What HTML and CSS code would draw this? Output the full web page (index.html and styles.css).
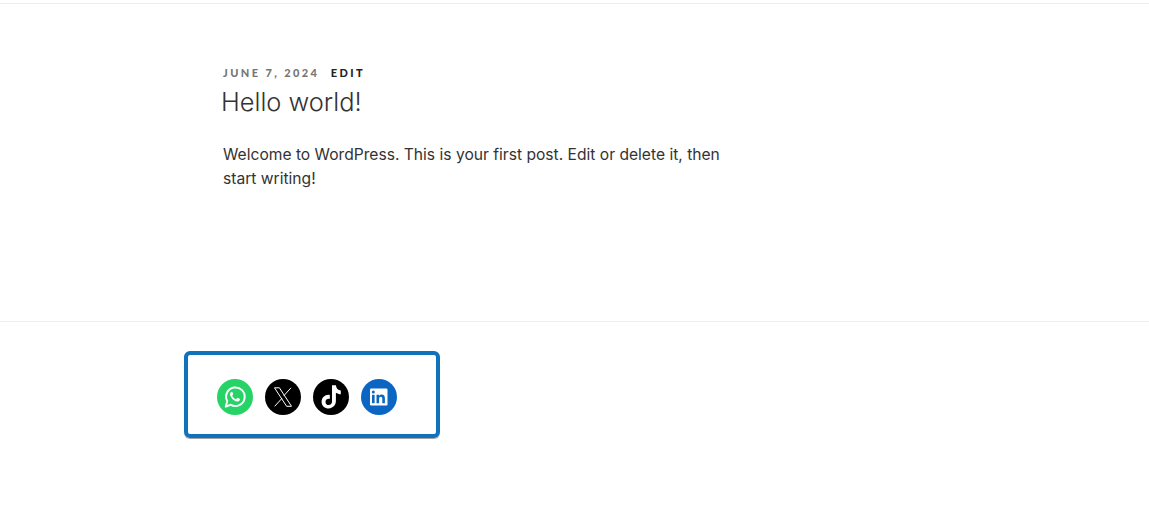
FILE: index.html
```html
<!DOCTYPE html>
<html lang="en">
<head>
<meta charset="utf-8">
<title>Hello world!</title>
<link rel="stylesheet" href="styles.css">
</head>
<body>
<header class="top-rule"></header>
<main class="content">
  <article class="post">
    <div class="meta"><span class="date">JUNE 7, 2024</span><a class="edit" href="#">EDIT</a></div>
    <h1 class="title">Hello world!</h1>
    <p class="text">Welcome to WordPress. This is your first post. Edit or delete it, then start writing!</p>
  </article>
</main>
<footer class="footer">
  <div class="social-box">
    <a class="icon whatsapp" href="#" aria-label="WhatsApp">
      <svg viewBox="0 0 36 36" width="36" height="36"><path class="wa-ring" d="M8.800 27.600l1.500-5.300a9.300 9.300 0 1 1 3.500 3.500z"/><path class="wa-phone" d="M14.900 12.700c-.4 0-.8.2-1.100.6-.5.6-.9 1.400-.8 2.300.1 1.200.8 2.500 2 3.800 1.500 1.700 3.200 2.800 5 3.100 1 .2 2-.2 2.600-1 .3-.4.4-.9.3-1.400-.8-.6-1.600-1.100-2.500-1.400-.4.3-.7.8-1 1.200-.2.2-.5.2-.8.1-1.400-.6-2.600-1.700-3.300-3-.1-.2-.1-.4.1-.6.3-.3.6-.7.8-1.100-.2-.9-.6-1.800-1-2.500z"/></svg>
    </a>
    <a class="icon x" href="#" aria-label="X">
      <svg viewBox="0 0 36 36" width="36" height="36"><path class="x-outline" d="M9.500 8.800h4.900l12.100 18.500h-4.900z"/><path class="x-stroke" d="M26 8.800l-7.300 8.100M17 19.300l-7.300 8"/></svg>
    </a>
    <a class="icon tiktok" href="#" aria-label="TikTok">
      <svg viewBox="0 0 36 36" width="36" height="36"><path class="tt" d="M19 6.200h3.900c.2 3 2.100 5 4.900 5.200v3.900c-1.900 0-3.500-.6-4.900-1.500v8.300c0 4.300-3.300 7.300-7.200 7.300S8.600 26.700 8.600 22.900c0-4.400 3.700-7.700 8.200-7v4c-2.200-.6-4.300.8-4.300 3 0 1.800 1.400 3.200 3.200 3.200 1.900 0 3.300-1.500 3.300-3.300z"/></svg>
    </a>
    <a class="icon linkedin" href="#" aria-label="LinkedIn">
      <svg viewBox="0 0 36 36" width="36" height="36"><rect class="li-bg" x="9" y="9.500" width="17.500" height="17" rx="1.200"/><rect class="li-fg" x="11" y="15.800" width="2.600" height="8.400"/><circle class="li-fg" cx="12.300" cy="13" r="1.500"/><path class="li-fg" d="M15.500 15.800h2.500V17c.5-.8 1.500-1.400 2.600-1.400 2.300 0 3.300 1.400 3.300 3.800v4.800h-2.600v-4.300c0-1.200-.3-2.100-1.400-2.100-1.200 0-1.800.9-1.800 2.100v4.300h-2.600z"/></svg>
    </a>
  </div>
</footer>
</body>
</html>
```
FILE: styles.css
```css
* { box-sizing: border-box; }
html, body { margin: 0; padding: 0; background: #fff; }
body {
  font-family: "Inter", "Liberation Sans", sans-serif;
  color: #333;
  height: 506px;
  overflow: hidden;
}
.top-rule {
  height: 4px;
  border-bottom: 1px solid #eee;
}
.content {
  height: 318px;
  border-bottom: 1px solid #eee;
  padding: 62px 0 0 223px;
}
.post { width: 510px; }
.meta {
  display: flex;
  gap: 11.500px;
  font-family: "Lato", sans-serif;
  font-size: 11px;
  font-weight: 900;
  letter-spacing: 2.400px;
  line-height: 14px;
}
.date { color: #767676; }
.edit { color: #222; text-decoration: none; }
.title {
  margin: 5px 0 0 -2px;
  font-size: 25.400px;
  font-weight: 300;
  line-height: 34px;
  color: #333;
}
.text {
  margin: 24px 0 0;
  font-size: 15.620px;
  font-weight: 400;
  line-height: 24px;
  color: #333;
}
.footer { padding: 29px 0 0 183.500px; }
.social-box {
  width: 256px;
  height: 87px;
  border: 4px solid #0f72ba;
  border-radius: 6px;
  box-shadow: 0 1px 0 rgba(90, 90, 90, 0.55);
  padding: 24px 0 0 29.500px;
  display: flex;
  gap: 12px;
  align-items: flex-start;
}
.icon {
  display: block;
  width: 36px;
  height: 36px;
  border-radius: 50%;
}
.icon svg { display: block; }
.whatsapp { background: #25d366; }
.x, .tiktok { background: #000; }
.linkedin { background: #0a66c2; }
.wa-ring { fill: none; stroke: #fff; stroke-width: 2; stroke-linejoin: round; }
.wa-phone { fill: #fff; }
.x-outline { fill: none; stroke: #fff; stroke-width: 1; }
.x-stroke { fill: none; stroke: #fff; stroke-width: 1; }
.tt { fill: #fff; }
.li-bg { fill: #fff; }
.li-fg { fill: #0a66c2; }
```
